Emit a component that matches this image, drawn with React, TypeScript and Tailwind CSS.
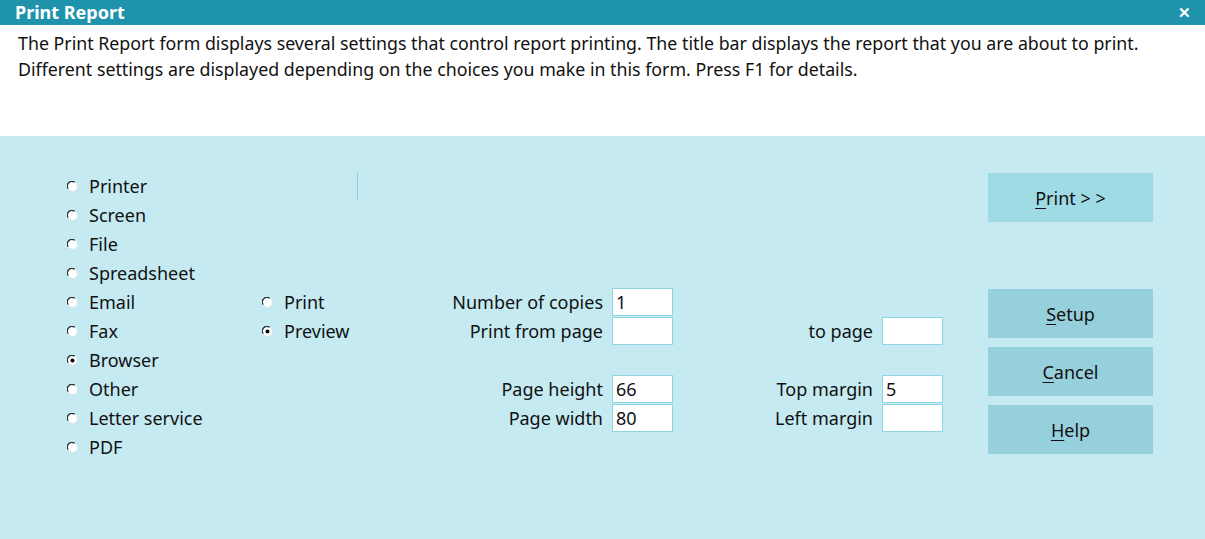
import React from "react";

const font = { fontFamily: '"Noto Sans", "Open Sans", sans-serif' };

function Radio({ checked }: { checked?: boolean }) {
  return (
    <svg width="11" height="11" viewBox="0 0 11 11" className="shrink-0">
      <circle cx="5.5" cy="5.5" r="4.6" fill="#ffffff" />
      <path d="M1.2 7.6 A4.6 4.6 0 0 1 7.6 1.2" stroke="#303030" strokeWidth="1.3" fill="none" />
      <path d="M9.8 3.4 A4.6 4.6 0 0 1 3.4 9.8" stroke="#e6e6e6" strokeWidth="1" fill="none" />
      {checked && <circle cx="5.5" cy="5.5" r="2" fill="#000" />}
    </svg>
  );
}

function RadioRow({ label, checked }: { label: string; checked?: boolean }) {
  return (
    <div className="flex h-[29px] items-center gap-[11px]">
      <Radio checked={checked} />
      <span>{label}</span>
    </div>
  );
}

function Field({ value }: { value?: string }) {
  return (
    <div className="h-[28px] w-[61px] border border-[#8fd4e2] bg-white pl-[3px] leading-[26px]">
      {value}
    </div>
  );
}

function Btn({ u, rest, light }: { u: string; rest: string; light?: boolean }) {
  return (
    <div
      className={`flex h-[49px] w-[165px] items-center justify-center pt-[2px] ${
        light ? "bg-[#9fdbe5]" : "bg-[#96d0dc]"
      }`}
    >
      <span>
        <span className="underline underline-offset-[3px]">{u}</span>
        {rest}
      </span>
    </div>
  );
}

export default function App() {
  const left = ["Printer", "Screen", "File", "Spreadsheet", "Email", "Fax", "Browser", "Other", "Letter service", "PDF"];
  return (
    <div className="flex h-[539px] w-[1205px] flex-col text-[18px] text-[#111]" style={font}>
      <div className="flex h-[25px] items-center justify-between bg-[#1e93ab] pl-[15px] pr-[14px] text-white">
        <span className="text-[18px] font-bold">Print Report</span>
        <span className="text-[15px] font-bold leading-none">✕</span>
      </div>
      <div className="h-[111px] bg-white pl-[18px] pt-[5px] text-[17.8px] leading-[26px]">
        <div>The Print Report form displays several settings that control report printing. The title bar displays the report that you are about to print.</div>
        <div>Different settings are displayed depending on the choices you make in this form. Press F1 for details.</div>
      </div>
      <div className="flex flex-1 bg-[#c5eaf2] pl-[67px] pt-[36px]">
        <div className="w-[195px]">
          {left.map((l) => (
            <RadioRow key={l} label={l} checked={l === "Browser"} />
          ))}
        </div>
        <div className="w-[95px] pt-[116px]">
          <RadioRow label="Print" />
          <RadioRow label="Preview" checked />
        </div>
        <div className="h-[28px] w-px bg-[#9cc9d3]" />
        <div className="w-[630px] pt-[116px]">
          <div className="grid grid-cols-[245px_61px_191px_61px] gap-x-[9px] gap-y-[1px]">
            <div className="flex h-[28px] items-center justify-end">Number of copies</div>
            <Field value="1" />
            <div />
            <div />
            <div className="flex h-[28px] items-center justify-end">Print from page</div>
            <Field />
            <div className="flex h-[28px] items-center justify-end">to page</div>
            <Field />
            <div className="h-[28px]" />
            <div />
            <div />
            <div />
            <div className="flex h-[28px] items-center justify-end">Page height</div>
            <Field value="66" />
            <div className="flex h-[28px] items-center justify-end">Top margin</div>
            <Field value="5" />
            <div className="flex h-[28px] items-center justify-end">Page width</div>
            <Field value="80" />
            <div className="flex h-[28px] items-center justify-end">Left margin</div>
            <Field />
          </div>
        </div>
        <div className="flex flex-col pt-[1px]">
          <Btn u="P" rest="rint > >" light />
          <div className="h-[67px]" />
          <div className="flex flex-col gap-[9px]">
            <Btn u="S" rest="etup" />
            <Btn u="C" rest="ancel" />
            <Btn u="H" rest="elp" />
          </div>
        </div>
      </div>
    </div>
  );
}
